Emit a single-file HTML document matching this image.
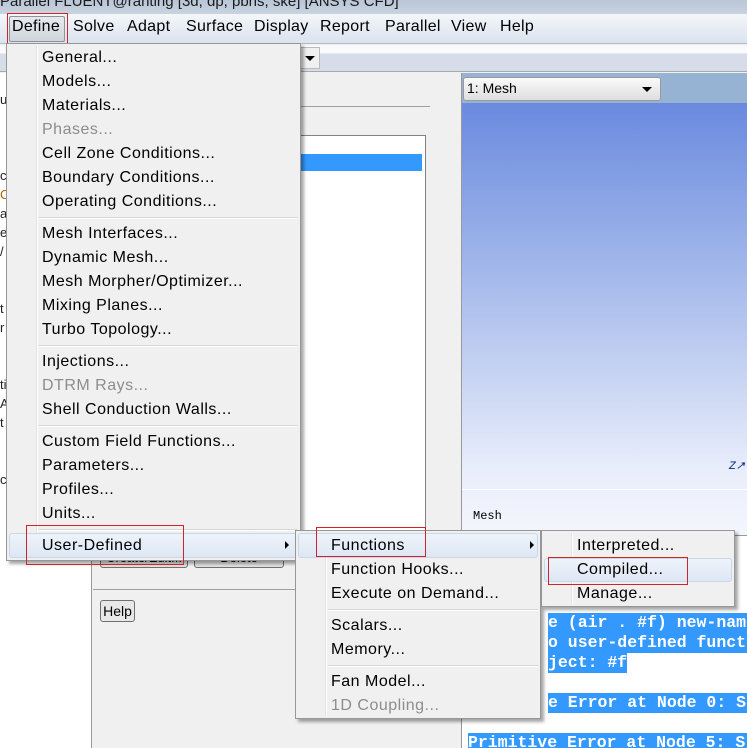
<!DOCTYPE html>
<html><head><style>
*{margin:0;padding:0;box-sizing:border-box}
html,body{width:747px;height:748px;overflow:hidden}
body{position:relative;background:#f0f0f0;font-family:"Liberation Sans",sans-serif;font-size:15px;color:#000}
.a{position:absolute}
.mi{position:absolute;left:35px;white-space:nowrap;line-height:24px;height:24px;font-size:16px;letter-spacing:0.5px}
.dis{color:#8d8d8d}
.sep{position:absolute;height:2px;border-top:1px solid #d7d7d7;border-bottom:1px solid #fff}
.red{position:absolute;border:1px solid #d2232a}
.menu{position:absolute;background:#f0f0f0;border:1px solid #979797;box-shadow:3px 3px 3px rgba(0,0,0,.35)}
.gut{position:absolute;top:2px;bottom:2px;border-left:1px solid #e2e3e3;border-right:1px solid #fff}
.con{position:absolute;font-family:"Liberation Mono",monospace;font-size:16.5px;font-weight:bold;color:#fff;background:#3399ff;height:20px;line-height:20px;white-space:pre}
.mb{position:absolute;top:18px;font-size:16px;letter-spacing:0.3px;white-space:nowrap}
</style></head><body>
<!-- title -->
<div class="a" style="left:0;top:0;width:747px;height:14px;background:linear-gradient(#b9c6d6,#c8d3e0);overflow:hidden"><div class="a" style="left:0;top:-7px;font-size:15px;color:#1a1a1a;white-space:nowrap">Parallel FLUENT@ranting [3d, dp, pbns, ske] [ANSYS CFD]</div></div>
<!-- menubar -->
<div class="a" style="left:0;top:14px;width:747px;height:30px;background:linear-gradient(#f4f6f9,#dbe3ee);border-bottom:1px solid #b6bcc6"></div>
<div class="a" style="left:9px;top:16px;width:56px;height:26px;background:linear-gradient(#e8eaee,#d0d5dc);border:1px solid #8e939a;border-radius:2px"></div>
<div class="mb" style="left:12px">Define</div>
<div class="mb" style="left:73px">Solve</div>
<div class="mb" style="left:127px">Adapt</div>
<div class="mb" style="left:186px">Surface</div>
<div class="mb" style="left:254px">Display</div>
<div class="mb" style="left:320px">Report</div>
<div class="mb" style="left:385px">Parallel</div>
<div class="mb" style="left:451px">View</div>
<div class="mb" style="left:500px">Help</div>
<div class="red" style="left:7px;top:13px;width:61px;height:34px"></div>
<!-- toolbar -->
<div class="a" style="left:0;top:45px;width:747px;height:27px;background:linear-gradient(#f7f8fa 0,#fafbfc 30%,#d6dce9 35%,#d6dce9);border-bottom:1px solid #a9a9a9"></div>
<div class="a" style="left:298px;top:47px;width:22px;height:22px;background:#f0f0f0;border:1px solid #bbb"></div>
<div class="a" style="left:305px;top:56px;border-left:5px solid transparent;border-right:5px solid transparent;border-top:5px solid #000"></div>
<!-- left panel -->
<div class="a" style="left:0;top:73px;width:92px;height:675px;background:#fff;border-right:1px solid #999"></div>
<div class="a" style="left:0;top:90px;font-size:13px;line-height:19px;color:#222">u<br><br><br><br>c<br><span style="color:#a60">C</span><br>a<br>e<br>/<br><br><br>t<br>r<br><br><br>ti<br>A<br>t<br><br><br>c</div>
<!-- middle panel -->
<div class="a" style="left:93px;top:73px;width:368px;height:675px;background:#f0f0f0"></div>
<div class="a" style="left:300px;top:106px;width:130px;height:1px;background:#a0a0a0"></div>
<div class="a" style="left:300px;top:135px;width:126px;height:415px;background:#fff;border:1px solid #828282"></div>
<div class="a" style="left:300px;top:154px;width:122px;height:17px;background:#3399ff"></div>
<div class="a" style="left:100px;top:548px;width:88px;height:20px;border:1px solid #707070;border-radius:3px;background:#e3e3e3;font-size:13px;text-align:center;line-height:18px">Create/Edit...</div>
<div class="a" style="left:194px;top:548px;width:90px;height:20px;border:1px solid #707070;border-radius:3px;background:#e3e3e3;font-size:13px;text-align:center;line-height:18px">Delete</div>
<div class="a" style="left:93px;top:589px;width:368px;height:1px;background:#a0a0a0"></div>
<div class="a" style="left:100px;top:600px;width:35px;height:22px;border:1px solid #707070;border-radius:3px;background:#e8e8e8;font-size:14px;text-align:center;line-height:20px">Help</div>
<!-- graphics -->
<div class="a" style="left:461px;top:73px;width:286px;height:462px;border-left:1px solid #999;background:linear-gradient(#6a8adf 30px,#8fa8e6 140px,#c6d3f2 300px,#e9eefb 400px,#f4f6fd)"></div>
<div class="a" style="left:462px;top:73px;width:285px;height:30px;background:#97b3d3"></div>
<div class="a" style="left:463px;top:77px;width:198px;height:24px;background:linear-gradient(#fafafa,#dedede);border:1px solid #9a9a9a;border-radius:3px"></div>
<div class="a" style="left:467px;top:80px;font-size:14px">1: Mesh</div>
<div class="a" style="left:642px;top:87px;border-left:5px solid transparent;border-right:5px solid transparent;border-top:5px solid #000"></div>
<div class="a" style="left:462px;top:489px;width:285px;height:1px;background:#fff"></div>
<div class="a" style="left:473px;top:509px;font-family:'Liberation Mono',monospace;font-size:12px">Mesh</div>
<div class="a" style="left:729px;top:459px;font-size:11px;color:#002288;font-style:italic">Z&#x2197;</div>
<!-- console -->
<div class="a" style="left:461px;top:535px;width:286px;height:213px;background:#fff;border-left:1px solid #999;border-top:1px solid #999"></div>
<div class="con" style="left:548px;top:613px;width:199px">e (air . #f) new-nam</div>
<div class="con" style="left:548px;top:633px;width:199px">o user-defined funct</div>
<div class="con" style="left:548px;top:653px">ject: #f</div>
<div class="con" style="left:548px;top:693px;width:199px">e Error at Node 0: S</div>
<div class="con" style="left:468px;top:733px;width:279px">Primitive Error at Node 5: S</div>
<!-- Define menu -->
<div class="menu" style="left:6px;top:43px;width:295px;height:518px">
<div class="gut" style="left:29px"></div>
<div class="mi" style="top:2px">General...</div>
<div class="mi" style="top:26px">Models...</div>
<div class="mi" style="top:50px">Materials...</div>
<div class="mi dis" style="top:74px">Phases...</div>
<div class="mi" style="top:98px">Cell Zone Conditions...</div>
<div class="mi" style="top:122px">Boundary Conditions...</div>
<div class="mi" style="top:146px">Operating Conditions...</div>
<div class="sep" style="left:32px;width:258px;top:173px"></div>
<div class="mi" style="top:178px">Mesh Interfaces...</div>
<div class="mi" style="top:202px">Dynamic Mesh...</div>
<div class="mi" style="top:226px">Mesh Morpher/Optimizer...</div>
<div class="mi" style="top:250px">Mixing Planes...</div>
<div class="mi" style="top:274px">Turbo Topology...</div>
<div class="sep" style="left:32px;width:258px;top:301px"></div>
<div class="mi" style="top:306px">Injections...</div>
<div class="mi dis" style="top:330px">DTRM Rays...</div>
<div class="mi" style="top:354px">Shell Conduction Walls...</div>
<div class="sep" style="left:32px;width:258px;top:381px"></div>
<div class="mi" style="top:386px">Custom Field Functions...</div>
<div class="mi" style="top:410px">Parameters...</div>
<div class="mi" style="top:434px">Profiles...</div>
<div class="mi" style="top:458px">Units...</div>
<div class="sep" style="left:32px;width:258px;top:485px"></div>
<div class="a" style="left:2px;top:489px;width:289px;height:25px;background:linear-gradient(#eef3fa,#dde7f4);border:1px solid #c9d7ea;border-radius:3px"></div>
<div class="mi" style="top:490px">User-Defined</div>
<div class="a" style="left:278px;top:497px;border-top:4px solid transparent;border-bottom:4px solid transparent;border-left:4px solid #000"></div>
</div>
<div class="red" style="left:26px;top:525px;width:158px;height:40px"></div>
<!-- submenu 1 -->
<div class="menu" style="left:295px;top:530px;width:246px;height:189px">
<div class="gut" style="left:29px"></div>
<div class="a" style="left:2px;top:2px;width:240px;height:25px;background:linear-gradient(#eef3fa,#dde7f4);border:1px solid #c9d7ea;border-radius:3px"></div>
<div class="mi" style="top:3px">Functions</div>
<div class="a" style="left:234px;top:10px;border-top:4px solid transparent;border-bottom:4px solid transparent;border-left:4px solid #000"></div>
<div class="mi" style="top:27px">Function Hooks...</div>
<div class="mi" style="top:51px">Execute on Demand...</div>
<div class="sep" style="left:32px;width:210px;top:78px"></div>
<div class="mi" style="top:83px">Scalars...</div>
<div class="mi" style="top:107px">Memory...</div>
<div class="sep" style="left:32px;width:210px;top:134px"></div>
<div class="mi" style="top:139px">Fan Model...</div>
<div class="mi dis" style="top:163px">1D Coupling...</div>
</div>
<div class="red" style="left:316px;top:527px;width:110px;height:30px"></div>
<!-- submenu 2 -->
<div class="menu" style="left:541px;top:530px;width:194px;height:77px">
<div class="gut" style="left:29px"></div>
<div class="mi" style="top:3px">Interpreted...</div>
<div class="a" style="left:2px;top:27px;width:188px;height:24px;background:linear-gradient(#eef3fa,#dde7f4);border:1px solid #c9d7ea;border-radius:3px"></div>
<div class="mi" style="top:27px">Compiled...</div>
<div class="mi" style="top:51px">Manage...</div>
</div>
<div class="red" style="left:548px;top:557px;width:140px;height:28px"></div>
</body></html>
